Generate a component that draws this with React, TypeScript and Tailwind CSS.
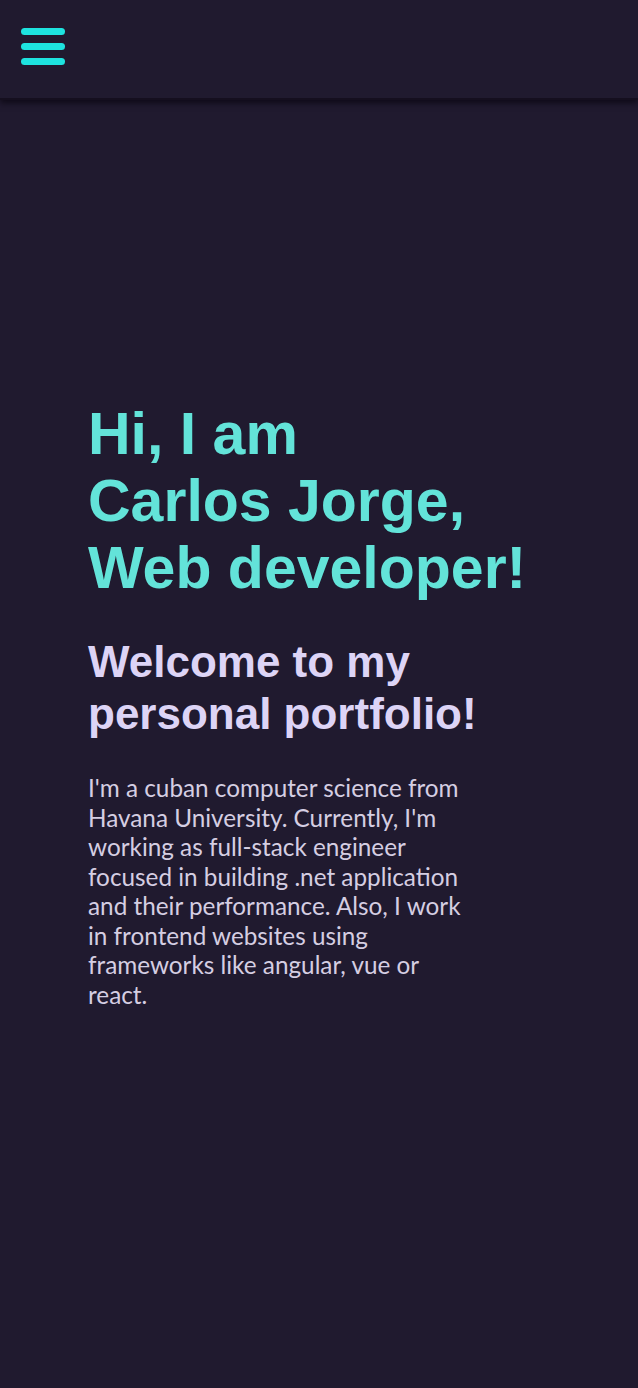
export default function App() {
  return (
    <div className="min-h-[1388px] bg-[#201a2f] flex flex-col">
      <header className="h-[100px] shrink-0 shadow-[0_3px_6px_rgba(10,6,18,0.8)] border-b-2 border-[#150f1f] px-[21px] pt-[28px]">
        <button aria-label="Open menu" className="flex flex-col gap-[8px] w-[44px]">
          <span className="block h-[7px] w-full rounded-sm bg-[#1ee3df]" />
          <span className="block h-[7px] w-full rounded-sm bg-[#1ee3df]" />
          <span className="block h-[7px] w-full rounded-sm bg-[#1ee3df]" />
        </button>
      </header>

      <main className="px-[88px] pt-[301px] pb-16 font-['Liberation_Sans',Arial,sans-serif]">
        <h1 className="text-[59px] leading-[67px] font-bold text-[#63e3d9]">
          Hi, I am
          <br />
          Carlos Jorge,
          <br />
          Web developer!
        </h1>
        <h2 className="mt-[34px] text-[44px] leading-[52px] font-bold text-[#ddd4f6]">
          Welcome to my
          <br />
          personal portfolio!
        </h2>
        <p className="mt-[33px] max-w-[385px] font-['Lato',sans-serif] text-[24.3px] leading-[29.5px] text-[#d5cee2]">
          I'm a cuban computer science from Havana University. Currently, I'm working as full-stack
          engineer focused in building .net application and their performance. Also, I work in
          frontend websites using frameworks like angular, vue or react.
        </p>
      </main>
    </div>
  );
}
